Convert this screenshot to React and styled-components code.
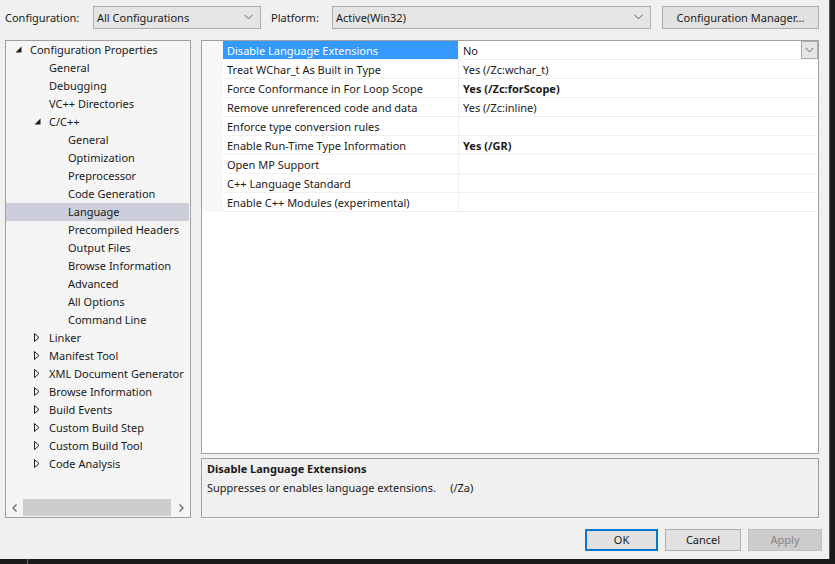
import React from 'react';
import styled, { createGlobalStyle, css } from 'styled-components';

const GlobalStyle = createGlobalStyle`
  html, body {
    margin: 0;
    padding: 0;
    background: #1b1b1b;
    width: 835px;
    height: 564px;
    overflow: hidden;
  }
  * { box-sizing: border-box; }
`;

const FONT = `"Noto Sans", "Open Sans", sans-serif`;

const Screen = styled.div`
  width: 835px;
  height: 564px;
  display: flex;
  flex-direction: column;
  background: #1b1b1b;
`;

const Dialog = styled.div`
  width: 830px;
  height: 559px;
  background: #f0f0f0;
  border-right: 1px solid #5a5a5a;
  font-family: ${FONT};
  font-size: 11px;
  color: #1a1a1a;
  display: flex;
  flex-direction: column;
  padding: 6px 10px 0 5px;
`;

const Taskbar = styled.div`
  flex: 1;
  display: flex;
  padding-left: 27px;
`;

const TaskDivider = styled.div`
  width: 1px;
  background: #6a6a6a;
`;

const TopBar = styled.div`
  display: flex;
  align-items: center;
  height: 23px;
`;

const Label = styled.span`
  white-space: nowrap;
  width: ${(p) => p.$w}px;
  flex: none;
  padding-bottom: 1px;
`;

const Combo = styled.div`
  width: ${(p) => p.$w}px;
  flex: none;
  height: 23px;
  background: #e5e5e5;
  border: 1px solid #acacac;
  display: flex;
  align-items: center;
  justify-content: space-between;
  padding: 0 7px 1px 3px;
  margin-right: ${(p) => p.$mr}px;
`;

const Chevron = ({ color = '#606060' }) => (
  <svg width="9" height="6" viewBox="0 0 9 6">
    <path d="M0.5 0.8 L4.5 4.8 L8.5 0.8" fill="none" stroke={color} strokeWidth="1" />
  </svg>
);

const Button = styled.div`
  height: ${(p) => p.$h || 22}px;
  width: ${(p) => p.$w}px;
  flex: none;
  display: flex;
  align-items: center;
  justify-content: center;
  padding-bottom: 1px;
  background: #e1e1e1;
  border: 1px solid #adadad;
  white-space: nowrap;
  ${(p) =>
    p.$default &&
    css`
      border: 2px solid #0078d7;
    `}
  ${(p) =>
    p.$disabled &&
    css`
      background: #cccccc;
      border-color: #bfbfbf;
      color: #838383;
    `}
`;

const Main = styled.div`
  display: flex;
  margin-top: 11px;
  height: 478px;
  gap: 10px;
`;

const Tree = styled.div`
  width: 186px;
  border: 1px solid #a0a0a0;
  background: #f5f5f5;
  display: flex;
  flex-direction: column;
  padding: 0 1px 0 0;
`;

const TreeBody = styled.div`
  flex: 1;
`;

const TreeRow = styled.div`
  height: 18px;
  display: flex;
  align-items: center;
  padding-left: ${(p) => p.$level * 19}px;
  padding-bottom: 1px;
  white-space: nowrap;
  overflow: hidden;
  background: ${(p) => (p.$selected ? '#cccedb' : 'transparent')};
`;

const Expander = styled.span`
  width: 24px;
  flex: none;
  display: flex;
  align-items: center;
  padding-left: 9px;
`;

const Expanded = () => (
  <svg width="7" height="7" viewBox="0 0 7 7">
    <path d="M6.5 0.5 L6.5 6.5 L0.5 6.5 Z" fill="#1e1e1e" />
  </svg>
);

const Collapsed = () => (
  <svg width="6" height="9" viewBox="0 0 6 9">
    <path d="M0.5 0.5 L5 4.5 L0.5 8.5 Z" fill="none" stroke="#1e1e1e" strokeWidth="1" />
  </svg>
);

const HScroll = styled.div`
  height: 17px;
  display: flex;
  align-items: center;
  margin: 0 -1px 1px 0;
`;

const ScrollArrow = styled.div`
  width: 17px;
  height: 17px;
  display: flex;
  align-items: center;
  justify-content: center;
`;

const ScrollTrack = styled.div`
  flex: 1;
  height: 17px;
  display: flex;
  align-items: center;
  padding-right: 2px;
`;

const Thumb = styled.div`
  flex: 1;
  height: 17px;
  background: #cdcdcd;
`;

const Right = styled.div`
  flex: 1;
  display: flex;
  flex-direction: column;
  gap: 4px;
  height: 478px;
`;

const Grid = styled.div`
  height: 415px;
  border: 1px solid #a0a0a0;
  background: #ffffff;
`;

const GridRow = styled.div`
  display: grid;
  grid-template-columns: 21px 236px 1fr;
  height: 19px;
`;

const Gutter = styled.div`
  background: #f7f7f7;
`;

const Cell = styled.div`
  display: flex;
  align-items: center;
  justify-content: space-between;
  padding-left: 4px;
  border-bottom: 1px solid #f0f0f0;
  border-right: ${(p) => (p.$name ? '1px solid #f0f0f0' : 'none')};
  white-space: nowrap;
  overflow: hidden;
  font-weight: ${(p) => (p.$bold ? 700 : 400)};
  background: ${(p) => (p.$selected ? '#3399ff' : 'transparent')};
  color: ${(p) => (p.$selected ? '#ffffff' : '#1a1a1a')};
`;

const DropButton = styled.div`
  width: 17px;
  height: 18px;
  background: #e5e5e5;
  border: 1px solid #acacac;
  display: flex;
  align-items: center;
  justify-content: center;
`;

const Description = styled.div`
  height: 60px;
  border: 1px solid #a0a0a0;
  box-shadow: 0 1px 0 #ffffff;
  background: #f0f0f0;
  padding: 0 5px;
  display: flex;
  flex-direction: column;
`;

const DescTitle = styled.div`
  font-weight: 700;
  line-height: 19px;
`;

const DescText = styled.div`
  line-height: 19px;
  white-space: pre;
`;

const Footer = styled.div`
  display: flex;
  justify-content: flex-end;
  gap: 7px;
  margin-top: 11px;
  margin-right: -3px;
`;

const tree = [
  { label: 'Configuration Properties', level: 0, state: 'open' },
  { label: 'General', level: 1 },
  { label: 'Debugging', level: 1 },
  { label: 'VC++ Directories', level: 1 },
  { label: 'C/C++', level: 1, state: 'open' },
  { label: 'General', level: 2 },
  { label: 'Optimization', level: 2 },
  { label: 'Preprocessor', level: 2 },
  { label: 'Code Generation', level: 2 },
  { label: 'Language', level: 2, selected: true },
  { label: 'Precompiled Headers', level: 2 },
  { label: 'Output Files', level: 2 },
  { label: 'Browse Information', level: 2 },
  { label: 'Advanced', level: 2 },
  { label: 'All Options', level: 2 },
  { label: 'Command Line', level: 2 },
  { label: 'Linker', level: 1, state: 'closed' },
  { label: 'Manifest Tool', level: 1, state: 'closed' },
  { label: 'XML Document Generator', level: 1, state: 'closed' },
  { label: 'Browse Information', level: 1, state: 'closed' },
  { label: 'Build Events', level: 1, state: 'closed' },
  { label: 'Custom Build Step', level: 1, state: 'closed' },
  { label: 'Custom Build Tool', level: 1, state: 'closed' },
  { label: 'Code Analysis', level: 1, state: 'closed' },
];

const props = [
  { name: 'Disable Language Extensions', value: 'No', selected: true },
  { name: 'Treat WChar_t As Built in Type', value: 'Yes (/Zc:wchar_t)' },
  { name: 'Force Conformance in For Loop Scope', value: 'Yes (/Zc:forScope)', bold: true },
  { name: 'Remove unreferenced code and data', value: 'Yes (/Zc:inline)' },
  { name: 'Enforce type conversion rules', value: '' },
  { name: 'Enable Run-Time Type Information', value: 'Yes (/GR)', bold: true },
  { name: 'Open MP Support', value: '' },
  { name: 'C++ Language Standard', value: '' },
  { name: 'Enable C++ Modules (experimental)', value: '' },
];

export default function App() {
  return (
    <Screen>
      <GlobalStyle />
      <Dialog>
        <TopBar>
          <Label $w={88}>Configuration:</Label>
          <Combo $w={168} $mr={10}>
            <span>All Configurations</span>
            <Chevron />
          </Combo>
          <Label $w={61}>Platform:</Label>
          <Combo $w={319} $mr={11}>
            <span>Active(Win32)</span>
            <Chevron />
          </Combo>
          <Button $w={157} $h={23}>Configuration Manager...</Button>
        </TopBar>

        <Main>
          <Tree>
            <TreeBody>
              {tree.map((item, i) => (
                <TreeRow key={i} $level={item.level} $selected={item.selected}>
                  <Expander>
                    {item.state === 'open' && <Expanded />}
                    {item.state === 'closed' && <Collapsed />}
                  </Expander>
                  {item.label}
                </TreeRow>
              ))}
            </TreeBody>
            <HScroll>
              <ScrollArrow>
                <svg width="5" height="8" viewBox="0 0 5 8">
                  <path d="M4.5 0.5 L1 4 L4.5 7.5" fill="none" stroke="#606060" strokeWidth="1.2" />
                </svg>
              </ScrollArrow>
              <ScrollTrack>
                <Thumb />
              </ScrollTrack>
              <ScrollArrow>
                <svg width="5" height="8" viewBox="0 0 5 8">
                  <path d="M0.5 0.5 L4 4 L0.5 7.5" fill="none" stroke="#606060" strokeWidth="1.2" />
                </svg>
              </ScrollArrow>
            </HScroll>
          </Tree>

          <Right>
            <Grid>
              {props.map((p, i) => (
                <GridRow key={i}>
                  <Gutter />
                  <Cell $name $selected={p.selected}>{p.name}</Cell>
                  <Cell $bold={p.bold}>
                    {p.value}
                    {p.selected && (
                      <DropButton>
                        <Chevron />
                      </DropButton>
                    )}
                  </Cell>
                </GridRow>
              ))}
            </Grid>
            <Description>
              <DescTitle>Disable Language Extensions</DescTitle>
              <DescText>{'Suppresses or enables language extensions.     (/Za)'}</DescText>
            </Description>
          </Right>
        </Main>

        <Footer>
          <Button $w={73} $default>OK</Button>
          <Button $w={76}>Cancel</Button>
          <Button $w={74} $disabled>Apply</Button>
        </Footer>
      </Dialog>
      <Taskbar>
        <TaskDivider />
      </Taskbar>
    </Screen>
  );
}
